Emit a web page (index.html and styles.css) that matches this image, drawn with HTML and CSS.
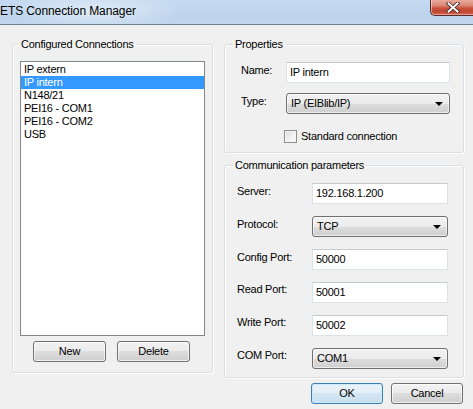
FILE: index.html
```html
<!DOCTYPE html>
<html>
<head>
<meta charset="utf-8">
<title>ETS Connection Manager</title>
<link rel="stylesheet" href="styles.css">
</head>
<body>
<div class="window">
  <div class="titlebar">
    <span class="title">ETS Connection Manager</span>
    <div class="close">
      <svg width="14" height="11" viewBox="0 0 14 11">
        <path d="M2.5 1.5 L11.5 9.5 M11.5 1.5 L2.5 9.5" stroke="#3b2020" stroke-width="3.6" stroke-linecap="square" fill="none"/>
        <path d="M2.5 1.5 L11.5 9.5 M11.5 1.5 L2.5 9.5" stroke="#ffffff" stroke-width="2" stroke-linecap="square" fill="none"/>
      </svg>
    </div>
  </div>
  <div class="main">
    <fieldset class="group group-conn">
      <legend>Configured Connections</legend>
      <ul class="listbox">
        <li>IP extern</li>
        <li class="sel">IP intern</li>
        <li>N148/21</li>
        <li>PEI16 - COM1</li>
        <li>PEI16 - COM2</li>
        <li>USB</li>
      </ul>
      <div class="btnrow">
        <button class="btn">New</button>
        <button class="btn">Delete</button>
      </div>
    </fieldset>
    <div class="rightcol">
      <fieldset class="group group-props">
        <legend>Properties</legend>
        <div class="form props-form">
          <span class="lbl">Name:</span><div class="textbox">IP intern</div>
          <span class="lbl">Type:</span><div class="combo">IP (EIBlib/IP)<span class="arrow"></span></div>
          <span></span><div class="check"><span class="box"></span><span>Standard connection</span></div>
        </div>
      </fieldset>
      <fieldset class="group group-comm">
        <legend>Communication parameters</legend>
        <div class="form comm-form">
          <span class="lbl">Server:</span><div class="textbox">192.168.1.200</div>
          <span class="lbl">Protocol:</span><div class="combo">TCP<span class="arrow"></span></div>
          <span class="lbl">Config Port:</span><div class="textbox">50000</div>
          <span class="lbl lbl-up">Read Port:</span><div class="textbox">50001</div>
          <span class="lbl lbl-up">Write Port:</span><div class="textbox">50002</div>
          <span class="lbl lbl-up">COM Port:</span><div class="combo">COM1<span class="arrow"></span></div>
        </div>
      </fieldset>
    </div>
  </div>
  <div class="footer">
    <button class="btn btn-default">OK</button>
    <button class="btn">Cancel</button>
  </div>
</div>
</body>
</html>
```

FILE: styles.css
```css
html, body {
  margin: 0;
  padding: 0;
}
body {
  width: 473px;
  height: 409px;
  overflow: hidden;
  background: #f0f0f0;
  font-family: "Liberation Sans", Arial, sans-serif;
  font-size: 11px;
  letter-spacing: -0.25px;
  color: #000;
}
.window {
  width: 473px;
  height: 409px;
  background: #f0f0f0;
}
.titlebar {
  height: 24px;
  border-bottom: 1px solid #6d7d92;
  display: flex;
  align-items: flex-start;
  background:
    radial-gradient(ellipse 90px 16px at 95px 11px, rgba(255,255,255,0.55), rgba(255,255,255,0) 100%),
    linear-gradient(to bottom, #c6dbf1 0%, #bcd3ec 60%, #c2d7ee 100%);
}
.title {
  font-size: 12px;
  line-height: 14px;
  margin-top: 4px;
  margin-left: 0;
  color: #000;
  letter-spacing: -0.1px;
}
.close {
  margin-left: auto;
  width: 42px;
  height: 14px;
  border: 1px solid #5a2a2a;
  border-top: none;
  border-right: none;
  border-bottom-left-radius: 5px;
  background: linear-gradient(to bottom, #e9a99b 0%, #dd8a79 35%, #c7503c 55%, #c24632 80%, #d67060 100%);
  box-shadow: inset 1px 0 0 rgba(255,255,255,0.45), inset 0 -1px 0 rgba(255,255,255,0.35);
  display: flex;
  align-items: center;
  justify-content: center;
  padding-bottom: 1px;
  box-sizing: content-box;
}
.close svg {
  display: block;
  margin-left: 2px;
}
.main {
  display: flex;
  align-items: flex-start;
  padding-left: 12px;
  gap: 11px;
  margin-top: 13px;
}
.group {
  margin: 0;
  min-width: 0;
  border: 1px solid #d9dfe3;
  border-radius: 3px;
  box-shadow: inset 1px 1px 0 #ffffff, 1px 1px 0 #ffffff;
  box-sizing: border-box;
}
.group legend {
  padding: 0 2px;
  line-height: 13px;
  font-size: 11px;
  color: #000;
}
.group-conn {
  width: 201px;
  padding: 10px 0 10px 0;
}
.group-conn legend {
  margin-left: 6px;
}
.listbox {
  list-style: none;
  margin: 0 0 0 7px;
  padding: 1px 0 0 0;
  width: 185px;
  height: 275px;
  box-sizing: border-box;
  border: 1px solid #828790;
  background: #ffffff;
}
.listbox li {
  height: 13px;
  line-height: 13px;
  padding-left: 3px;
  white-space: nowrap;
}
.listbox li.sel {
  background: #3399ff;
  color: #ffffff;
}
.btnrow {
  display: flex;
  gap: 11px;
  margin-top: 5px;
  padding-left: 20px;
}
.btn {
  width: 73px;
  height: 21px;
  box-sizing: border-box;
  border: 1px solid #707070;
  border-radius: 3px;
  background: linear-gradient(to bottom, #f2f2f2 0%, #ebebeb 50%, #dddddd 50%, #cfcfcf 100%);
  box-shadow: inset 0 0 0 1px rgba(255,255,255,0.7);
  font-family: "Liberation Sans", Arial, sans-serif;
  font-size: 11px;
  letter-spacing: -0.25px;
  color: #000;
  padding: 0;
  line-height: 19px;
  text-align: center;
}
.btn-default {
  border-color: #3c7fb1;
  background: linear-gradient(to bottom, #eaf3f9 0%, #e2eef7 50%, #d3e6f3 50%, #c9dfef 100%);
  box-shadow: inset 0 0 0 1px rgba(200,235,255,0.9);
}
.rightcol {
  width: 240px;
  display: flex;
  flex-direction: column;
}
.group-props {
  padding: 11px 0 9px 0;
}
.group-props legend {
  margin-left: 8px;
}
.group-comm {
  margin-top: 6px;
  padding: 11px 0 8px 0;
}
.group-comm legend {
  margin-left: 8px;
}
.form {
  display: grid;
  align-items: center;
}
.props-form {
  grid-template-columns: 45px 164px;
  grid-template-rows: 21px 21px 19px;
  row-gap: 10px;
  padding-left: 16px;
}
.props-form .check {
  align-self: end;
}
.comm-form {
  grid-template-columns: 75px 136px;
  grid-auto-rows: 21px;
  row-gap: 12px;
  padding-left: 12px;
}
.lbl {
  white-space: nowrap;
  line-height: 13px;
  margin-bottom: 4px;
}
.lbl.lbl-up {
  margin-bottom: 7px;
}
.textbox {
  height: 21px;
  box-sizing: border-box;
  border: 1px solid #dde2e8;
  border-top-color: #c5cad0;
  background: #ffffff;
  line-height: 19px;
  padding-left: 3px;
  white-space: nowrap;
}
.combo {
  position: relative;
  height: 21px;
  box-sizing: border-box;
  border: 1px solid #707070;
  border-radius: 3px;
  background: linear-gradient(to bottom, #f2f2f2 0%, #ebebeb 50%, #dddddd 50%, #cfcfcf 100%);
  box-shadow: inset 0 0 0 1px rgba(255,255,255,0.6);
  line-height: 19px;
  padding-left: 4px;
  white-space: nowrap;
}
.arrow {
  position: absolute;
  right: 6px;
  top: 8px;
  width: 0;
  height: 0;
  border-left: 4px solid transparent;
  border-right: 4px solid transparent;
  border-top: 4px solid #000;
}
.check {
  display: flex;
  align-items: center;
  gap: 4px;
  margin-left: -2px;
  white-space: nowrap;
  line-height: 13px;
}
.check .box {
  width: 13px;
  height: 13px;
  box-sizing: border-box;
  border: 1px solid #8e8f8f;
  background: linear-gradient(135deg, #dcdcdc 0%, #f4f4f4 60%, #ffffff 100%);
  box-shadow: inset 0 0 0 1px #f4f4f4;
}
.footer {
  display: flex;
  justify-content: flex-end;
  gap: 8px;
  padding-right: 10px;
  margin-top: 5px;
}
.footer .btn {
  width: 72px;
}
```
